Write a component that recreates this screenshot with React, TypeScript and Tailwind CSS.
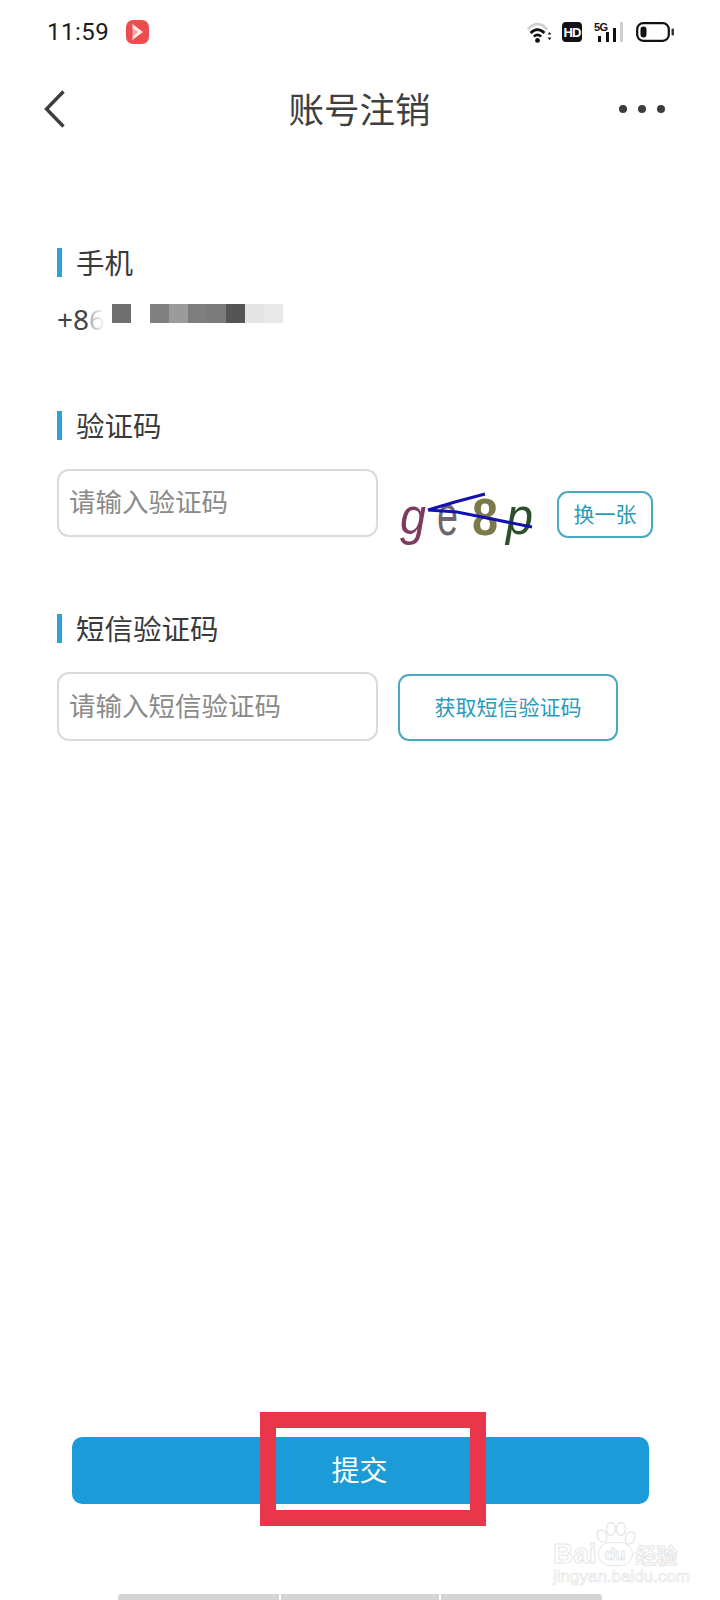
import React from "react";

const cjk = "font-['Noto_Sans_CJK_SC',sans-serif]";

function Label({ text }: { text: string }) {
  return (
    <div className="flex h-[29px] items-center">
      <div className="h-[29px] w-[5px] bg-[#2ea3d0]" />
      <span className="ml-[14px] pb-[2px] text-[28.5px] leading-[29px] text-[#3a3a3a]">{text}</span>
    </div>
  );
}

function Wifi() {
  return (
    <svg width="25" height="21" viewBox="0 0 25 21" fill="none">
      <path d="M0.8 7.5 C6.5 0.2 14.5 0.2 20.2 7.5" stroke="#cfcfcf" strokeWidth="2.8" />
      <path d="M3.6 11 C8 6.6 13 6.6 17.4 11" stroke="#111" strokeWidth="2.8" />
      <path d="M6.8 14.6 C9.5 12 11.5 12 14.2 14.6" stroke="#111" strokeWidth="2.6" />
      <circle cx="10.5" cy="18.4" r="2.4" fill="#111" />
      <path d="M20.5 12.6 L22.5 10 L24.5 12.6 Z M20.5 15.6 L22.5 18.2 L24.5 15.6 Z" fill="#222" />
    </svg>
  );
}

function Signal() {
  return (
    <div className="relative h-[20px] w-[29px]">
      <span className="absolute left-0 top-[-2px] font-['Liberation_Sans',sans-serif] text-[11px] font-bold leading-[14px] tracking-[-0.5px] text-[#111]">
        5G
      </span>
      <svg className="absolute left-0 top-0" width="29" height="20" viewBox="0 0 29 20">
        <rect x="4" y="14" width="3" height="6" fill="#111" />
        <rect x="12" y="10" width="3" height="10" fill="#111" />
        <rect x="19" y="6" width="3" height="14" fill="#111" />
        <rect x="26" y="0" width="3" height="20" fill="#cfcfcf" />
      </svg>
    </div>
  );
}

function Battery() {
  return (
    <svg width="38" height="20" viewBox="0 0 38 20" fill="none">
      <rect x="1.2" y="1.2" width="31.6" height="17.6" rx="6" stroke="#111" strokeWidth="2.2" />
      <rect x="4.5" y="4.5" width="6" height="11" rx="3" fill="#111" />
      <rect x="35.5" y="6.5" width="2.5" height="7" rx="1" fill="#333" />
    </svg>
  );
}

function Captcha() {
  return (
    <svg className="ml-[22px] shrink-0" width="135" height="78" viewBox="0 0 135 78">
      <g transform="translate(0 24)">
        <g fontFamily="'Liberation Sans', sans-serif">
          <text x="0" y="41" fontSize="52" fontStyle="italic" fill="#7d3a63" textLength="26" lengthAdjust="spacingAndGlyphs">g</text>
          <text x="37" y="42" fontSize="58" fill="#6d6670" textLength="21" lengthAdjust="spacingAndGlyphs">e</text>
          <text x="72" y="42" fontSize="52" fontWeight="bold" fill="#7d7a4a" textLength="26" lengthAdjust="spacingAndGlyphs">8</text>
          <text x="106" y="41" fontSize="52" fontStyle="italic" fill="#2e4f2e" textLength="27" lengthAdjust="spacingAndGlyphs">p</text>
        </g>
        <path d="M28 17 L55 9 L85 1 M28 17 L57 19 L97 27 L132 34" stroke="#1212b0" strokeWidth="3" fill="none" />
      </g>
    </svg>
  );
}

function Watermark() {
  return (
    <div className="absolute left-[553px] top-[1522px] w-[130px] text-transparent [-webkit-text-stroke:1px_#e6e6e6]">
      <svg className="absolute left-[40px] top-0" width="50" height="30" viewBox="0 0 50 30" fill="none" stroke="#e6e6e6" strokeWidth="1.3">
        <ellipse cx="9" cy="14" rx="4.5" ry="6.5" transform="rotate(-25 9 14)" />
        <ellipse cx="18" cy="7" rx="4.5" ry="6.5" />
        <ellipse cx="28" cy="7" rx="4.5" ry="6.5" />
        <ellipse cx="37" cy="16" rx="4.5" ry="6.5" transform="rotate(25 37 16)" />
      </svg>
      <div className="mt-[20px] flex h-[24px] items-center font-['Liberation_Sans',sans-serif]">
        <span className="text-[28px] font-bold leading-[24px]">Bai</span>
        <span className="ml-[1px] flex h-[24px] w-[35px] shrink-0 items-center justify-center rounded-full border border-[#e6e6e6] text-[17px] font-bold leading-none">du</span>
        <span className={`${cjk} ml-[3px] whitespace-nowrap text-[21px] font-bold leading-[24px]`}>经验</span>
      </div>
      <div className="mt-[2px] whitespace-nowrap font-['Liberation_Sans',sans-serif] text-[17px] leading-[17px] [-webkit-text-stroke:0.7px_#e6e6e6]">
        jingyan.baidu.com
      </div>
    </div>
  );
}

const mask = ["bg-[#808080]", "bg-[#9b9b9b]", "bg-[#7e7e7e]", "bg-[#7a7a7a]", "bg-[#555555]", "bg-[#e4e4e4]", "bg-[#e8e8e8]"];

export default function App() {
  return (
    <div className={`${cjk} relative flex h-[1600px] w-[720px] flex-col overflow-hidden bg-white`}>
      <div className="flex h-[64px] items-center pl-[47px] pr-[46px]">
        <span className="font-['Roboto',sans-serif] text-[24px] leading-none tracking-[0.5px] text-[#1c1c1c]">11:59</span>
        <div className="ml-[17px] flex h-[24px] w-[23px] items-center justify-center rounded-[7px] bg-[#ee4d4f]">
          <svg width="11" height="16" viewBox="0 0 11 16">
            <path d="M0.5 0 L11 8 L0.5 16 L0.5 12 L5.5 8 L0.5 4.5 Z" fill="#ffe6e6" />
            <path d="M0.5 4.5 L5.5 8 L0.5 12 Z" fill="#f9a5a5" />
          </svg>
        </div>
        <div className="ml-auto flex items-center">
          <Wifi />
          <div className="ml-[10px] flex h-[20px] w-[20px] items-center justify-center rounded-[4px] bg-[#111] font-['Liberation_Sans',sans-serif] text-[13px] font-bold leading-none tracking-[-0.8px] text-white">
            HD
          </div>
          <div className="ml-[12px]">
            <Signal />
          </div>
          <div className="ml-[13px]">
            <Battery />
          </div>
        </div>
      </div>

      <div className="grid h-[90px] grid-cols-[1fr_auto_1fr] items-center pl-[44px] pr-[55px]">
        <svg width="21" height="38" viewBox="0 0 21 38" fill="none">
          <path d="M19.5 1.5 L2.5 19 L19.5 36.5" stroke="#3d3d3d" strokeWidth="3.4" />
        </svg>
        <span className="ml-[10px] pb-[2px] text-[35.5px] leading-none text-[#3f3f3f]">账号注销</span>
        <div className="flex gap-[11px] justify-self-end">
          <div className="h-[8px] w-[8px] rounded-full bg-[#3d3d3d]" />
          <div className="h-[8px] w-[8px] rounded-full bg-[#3d3d3d]" />
          <div className="h-[8px] w-[8px] rounded-full bg-[#3d3d3d]" />
        </div>
      </div>

      <div className="flex flex-col pl-[57px] pt-[94px]">
        <Label text="手机" />
        <div className="mt-[26px] flex h-[34px] items-start">
          <span className="font-['Noto_Sans',sans-serif] text-[28px] leading-[32px] text-[#444]">+8</span>
          <span className="bg-linear-to-r from-[#aaaaaa] to-[#ffffff] bg-clip-text font-['Noto_Sans',sans-serif] text-[28px] leading-[32px] text-transparent">6</span>
          <div className="mt-[1px] ml-[7px] h-[19px] w-[19px] bg-[#6e6e6e]" />
          <div className="mt-[1px] ml-[19px] flex">
            {mask.map((c, i) => (
              <div key={i} className={`h-[19px] w-[19px] ${c}`} />
            ))}
          </div>
        </div>

        <div className="mt-[74px]">
          <Label text="验证码" />
        </div>
        <div className="mt-[29px] flex h-[68px] items-start">
          <div className="flex h-[68px] w-[321px] items-center rounded-[12px] border-2 border-[#dadada] pb-[4px] pl-[10px] text-[26.5px] text-[#8a8a8a]">
            请输入验证码
          </div>
          <Captcha />
          <div className="mt-[22px] ml-[22px] flex h-[47px] w-[96px] items-center justify-center rounded-[11px] border-2 border-[#4aa8bf] pb-[2px] text-[21px] text-[#2a9ab8]">
            换一张
          </div>
        </div>

        <div className="mt-[77px]">
          <Label text="短信验证码" />
        </div>
        <div className="mt-[29px] flex items-start">
          <div className="flex h-[69px] w-[321px] items-center rounded-[12px] border-2 border-[#dadada] pb-[4px] pl-[10px] text-[26.5px] text-[#8a8a8a]">
            请输入短信验证码
          </div>
          <div className="mt-[2px] ml-[20px] flex h-[67px] w-[220px] items-center justify-center rounded-[11px] border-2 border-[#4aa8bf] pb-[2px] text-[21px] text-[#2a9ab8]">
            获取短信验证码
          </div>
        </div>
      </div>

      <div className="mt-auto mb-[96px] ml-[72px] flex h-[67px] w-[577px] items-center justify-center rounded-[10px] bg-[#1b9cd8] pb-[4px] pr-[2px] text-[28px] text-white">
        提交
      </div>

      <div className="absolute left-[260px] top-[1412px] h-[114px] w-[226px] border-[16px] border-[#e9364b]" />
      <Watermark />

      <div className="absolute bottom-0 left-[118px] flex h-[6px] w-[484px] gap-[2px] overflow-hidden rounded-t-[4px]">
        <div className="w-[161px] bg-[#d4d4d4]" />
        <div className="w-[158px] bg-[#d4d4d4]" />
        <div className="flex-1 bg-[#d4d4d4]" />
      </div>
    </div>
  );
}
